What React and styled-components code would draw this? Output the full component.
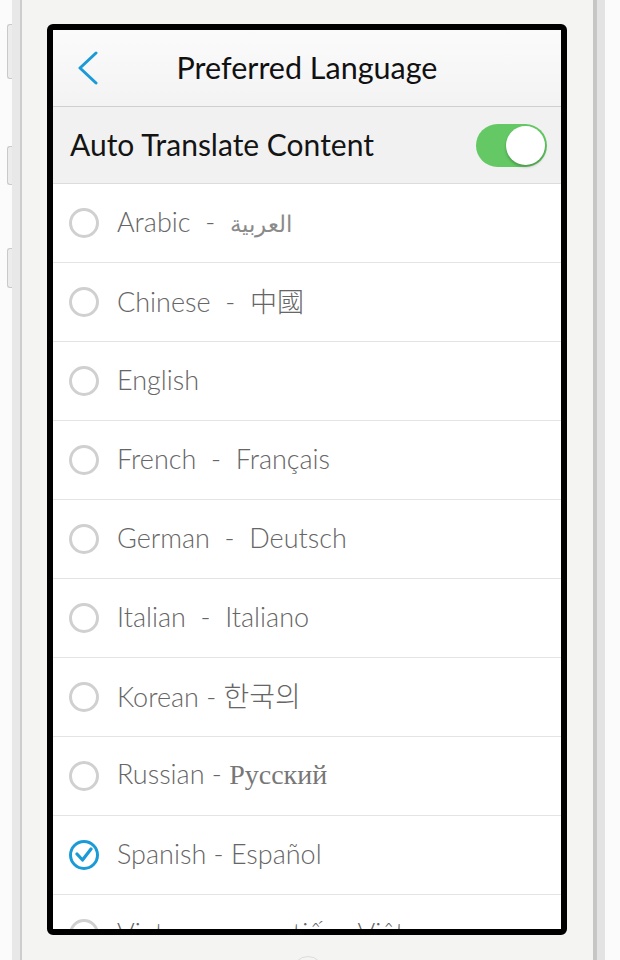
import React, { useState } from "react"
import styled, { createGlobalStyle } from "styled-components"

const Global = createGlobalStyle`
	html, body { margin: 0; padding: 0; background: #fbfbfb; }
	body { font-family: Lato, "Noto Sans", sans-serif; }
`

const Page = styled.div`
	width: 620px;
	height: 960px;
	overflow: hidden;
	position: relative;
	background: #fbfbfb;
`

const Phone = styled.div`
	margin-left: 12px;
	width: 577px;
	height: 960px;
	border-left: 8px solid #e8e8e8;
	border-right: 8px solid #e3e3e3;
`

const Body = styled.div`
	height: 100%;
	background: #f4f4f2;
	border-left: 2px solid #cdcdcd;
	border-right: 4px solid #c6c6c6;
	padding-top: 24px;
	padding-left: 25px;
	box-sizing: border-box;
`

const SideButton = styled.div`
	position: absolute;
	left: 7px;
	top: ${p => p.top}px;
	height: ${p => p.h}px;
	width: 5px;
	background: #ececec;
	border: 1px solid #c9c9c9;
	border-right: 0;
	border-radius: 3px 0 0 3px;
	box-sizing: border-box;
`

const HomeButton = styled.div`
	position: absolute;
	left: 292px;
	top: 956px;
	width: 30px;
	height: 30px;
	border-radius: 50%;
	border: 1px solid #dcdcdc;
`

const Screen = styled.div`
	width: 520px;
	height: 911px;
	border: 6px solid #000;
	border-radius: 6px;
	box-sizing: border-box;
	background: #fff;
	overflow: hidden;
	display: flex;
	flex-direction: column;
`

const Header = styled.div`
	flex: none;
	height: 76px;
	display: grid;
	grid-template-columns: 1fr auto 1fr;
	align-items: center;
	background: linear-gradient(#fbfbfb, #f3f3f3);
	border-bottom: 1px solid #cfcfcf;
`

const Back = styled.div`
	padding-left: 24px;
	display: flex;
	align-items: center;
`

const Title = styled.div`
	font-size: 30.5px;
	color: #111;
	margin-top: -3px;
`

const ToggleRow = styled.div`
	flex: none;
	height: 76px;
	display: flex;
	align-items: center;
	justify-content: space-between;
	padding: 0 14px 0 17px;
	background: #f1f1f1;
	border-bottom: 1px solid #dcdcdc;
`

const ToggleLabel = styled.div`
	font-size: 30px;
	color: #141414;
	margin-top: -2px;
`

const Switch = styled.button`
	width: 71px;
	height: 43px;
	border-radius: 22px;
	border: 0;
	padding: 2px;
	background: ${p => (p.on ? "#64c964" : "#ddd")};
	display: flex;
	justify-content: ${p => (p.on ? "flex-end" : "flex-start")};
	cursor: pointer;
`

const Knob = styled.span`
	width: 39px;
	height: 39px;
	border-radius: 50%;
	background: #fff;
	box-shadow: 0 2px 3px rgba(0, 0, 0, 0.25);
`

const List = styled.div`
	flex: 1;
	overflow: hidden;
`

const Row = styled.div`
	height: 78px;
	display: flex;
	align-items: center;
	gap: 18px;
	padding-left: 16px;
	border-bottom: 1px solid #e4e4e4;
	cursor: pointer;
`

const Radio = styled.span`
	flex: none;
	width: 30px;
	height: 30px;
	border-radius: 50%;
	border: 3px solid ${p => (p.checked ? "#1a9bd7" : "#d0d0d0")};
	box-sizing: border-box;
	display: flex;
	align-items: center;
	justify-content: center;
`

const Label = styled.span`
	font-size: 27px;
	font-weight: 300;
	color: #666;
	white-space: pre;
	margin-top: -4px;
`

const Native = styled.span`
	font-family: ${p => p.font || "inherit"};
	font-size: ${p => p.size || 27}px;
	font-weight: ${p => p.weight || 300};
	color: ${p => p.tone || "inherit"};
`

const languages = [
	{ name: "Arabic  -  ", native: "العربية", font: "\"DejaVu Sans\", sans-serif", size: 23, weight: 300, tone: "#8a8a8a" },
	{ name: "Chinese  -  ", native: "中國", font: "\"Noto Sans CJK TC\", sans-serif", size: 27 },
	{ name: "English" },
	{ name: "French  -  ", native: "Français" },
	{ name: "German  -  ", native: "Deutsch" },
	{ name: "Italian  -  ", native: "Italiano" },
	{ name: "Korean - ", native: "한국의", font: "\"Noto Sans CJK KR\", sans-serif", size: 28 },
	{ name: "Russian - ", native: "Русский", font: "\"Liberation Serif\", serif", size: 28, weight: 300, tone: "#777" },
	{ name: "Spanish - ", native: "Español" },
	{ name: "Vietnamese  -  ", native: "tiếng Việt" },
]

const Chevron = () => (
	<svg width="22" height="34" viewBox="0 0 22 34">
		<polyline points="19,2 3,17 19,32" fill="none" stroke="#1a9ad6" strokeWidth="3" strokeLinecap="round" strokeLinejoin="round" />
	</svg>
)

const Check = () => (
	<svg width="18" height="16" viewBox="0 0 18 16">
		<polyline points="2,7 7.5,13 16,2" fill="none" stroke="#1a9bd7" strokeWidth="3.2" strokeLinecap="round" strokeLinejoin="round" />
	</svg>
)

export default function App() {
	const [auto, setAuto] = useState(true)
	const [selected, setSelected] = useState("Spanish - ")

	return <Page>
		<Global />
		<SideButton top={24} h={55} />
		<SideButton top={146} h={39} />
		<SideButton top={248} h={40} />
		<Phone>
			<Body>
				<Screen>
					<Header>
						<Back><Chevron /></Back>
						<Title>Preferred Language</Title>
						<span />
					</Header>
					<ToggleRow>
						<ToggleLabel>Auto Translate Content</ToggleLabel>
						<Switch on={auto ? 1 : 0} onClick={() => setAuto(!auto)}><Knob /></Switch>
					</ToggleRow>
					<List>
						{languages.map(l => (
							<Row key={l.name} onClick={() => setSelected(l.name)}>
								<Radio checked={selected === l.name}>{selected === l.name && <Check />}</Radio>
								<Label>
									{l.name}
									{l.native && <Native font={l.font} size={l.size} weight={l.weight} tone={l.tone}>{l.native}</Native>}
								</Label>
							</Row>
						))}
					</List>
				</Screen>
			</Body>
		</Phone>
		<HomeButton />
	</Page>
}
